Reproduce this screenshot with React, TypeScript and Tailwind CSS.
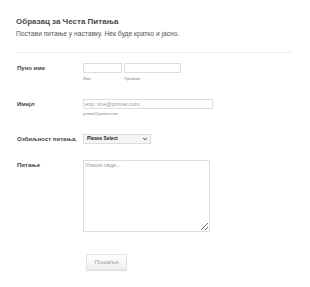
import { ChevronDown } from 'lucide-react'

// Small JotForm-style FAQ form, scaled down.

function Label({ children }: { children: React.ReactNode }) {
  return (
    <div className="w-[67px] shrink-0 pl-px text-[6px] font-bold leading-[10px] text-[#444]">{children}</div>
  )
}

export default function App() {
  return (
    <div className="min-h-[287px] bg-white pl-4 pt-[17px] font-['Liberation_Sans',Arial,sans-serif] text-[#555]">
      <h1 className="text-[8px] font-bold leading-[10px] text-[#4a4a4a]">Образац за Честа Питања</h1>
      <p className="mt-[3px] text-[6.7px] leading-[8px] text-[#555]">Постави питање у наставку. Нек буде кратко и јасно.</p>
      <div className="mt-[14px] w-[277px] border-t border-[#eee]" />

      {/* full name */}
      <div className="mt-[10px] flex">
        <Label>Пуно име</Label>
        <div className="flex gap-[2px]">
          <div className="flex flex-col">
            <input className="h-[10px] w-[39px] border border-[#ddd] bg-white outline-none" />
            <span className="mt-[3px] text-[4px] leading-[6px] text-[#888]">Име</span>
          </div>
          <div className="flex flex-col">
            <input className="h-[10px] w-[57px] border border-[#ddd] bg-white outline-none" />
            <span className="mt-[3px] text-[4px] leading-[6px] text-[#888]">Презиме</span>
          </div>
        </div>
      </div>

      {/* email */}
      <div className="mt-[17px] flex">
        <Label>Имејл</Label>
        <div className="flex flex-col">
          <input
            placeholder="нпр: ime@primer.com"
            className="h-[10px] w-[130px] border border-[#ddd] bg-white px-[1px] text-[5.6px] outline-none placeholder:text-[#999]"
          />
          <span className="mt-[2px] text-[4px] leading-[6px] text-[#888]">primer@primer.com</span>
        </div>
      </div>

      {/* severity */}
      <div className="mt-[17px] flex">
        <Label>Озбиљност питања.</Label>
        <div className="flex h-[10px] w-[68px] items-center justify-between border border-[#ddd] bg-[#f4f4f4] pl-[3px] pr-[2px]">
          <span className="text-[4.8px] font-bold text-[#222]">Please Select</span>
          <ChevronDown size={6} strokeWidth={3.5} className="text-[#222]" />
        </div>
      </div>

      {/* question */}
      <div className="mt-[16px] flex">
        <Label>Питање</Label>
        <textarea
          placeholder="Упиши овде..."
          className="h-[72px] w-[127px] border border-[#ddd] bg-white px-[1px] py-px text-[5.6px] leading-[7px] outline-none placeholder:text-[#999]"
        />
      </div>

      <button className="ml-[70px] mt-[22px] flex h-[16px] w-[41px] items-center justify-center rounded-[1px] border border-[#e2e2e2] bg-gradient-to-b from-white to-[#f0f0f0] text-[5.8px] text-[#999] shadow-[0_1px_1px_rgba(0,0,0,0.12)]">
        Пошаљи
      </button>
    </div>
  )
}
